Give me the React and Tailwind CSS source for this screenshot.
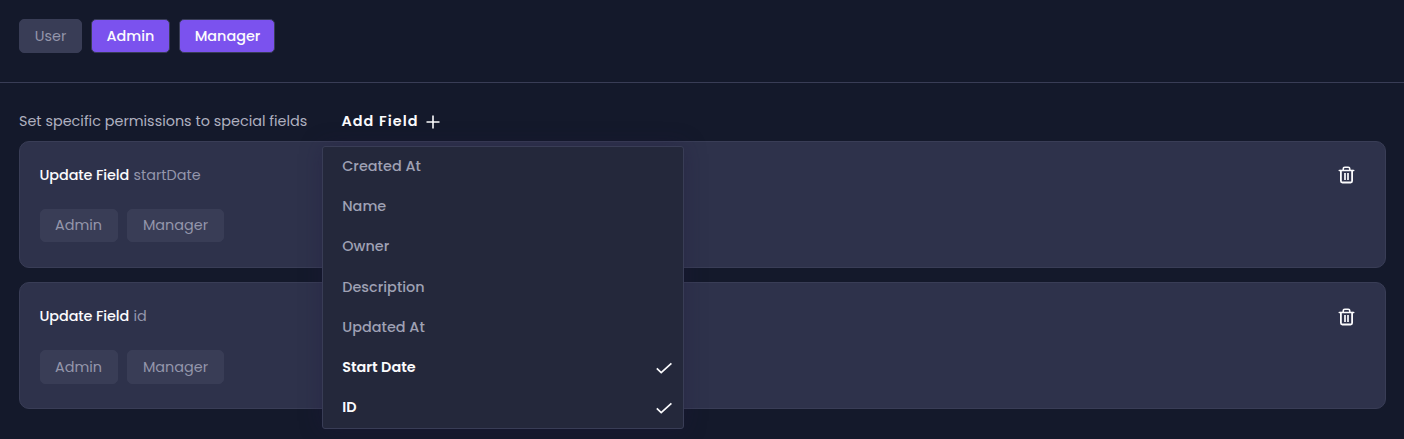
import React from "react";

const FIELDS = [
  { label: "Created At" },
  { label: "Name" },
  { label: "Owner" },
  { label: "Description" },
  { label: "Updated At" },
  { label: "Start Date", selected: true },
  { label: "ID", selected: true },
];

function TrashIcon() {
  return (
    <svg width="18" height="20" viewBox="0 0 18 20" fill="none" stroke="#fbfbfd" strokeLinecap="round" strokeLinejoin="round">
      <path d="M1.3 5.5H15.7" strokeWidth="1.6" />
      <path d="M5.2 5V3.9Q5.2 2.3 6.8 2.3H10.2Q11.8 2.3 11.8 3.9V5" strokeWidth="1.6" />
      <path d="M2.9 5.7V16Q2.9 17.5 4.4 17.5H12.6Q14.1 17.5 14.1 16V5.7" strokeWidth="1.8" />
      <path d="M7 8V15M10 8V15" strokeWidth="1.7" strokeLinecap="butt" />
    </svg>
  );
}

function CheckIcon() {
  return (
    <svg className="mt-[1.2px]" width="18" height="14" viewBox="0 0 18 14" fill="none" stroke="#fbfbfd" strokeWidth="1.7">
      <path d="M1.8 7.3L6.2 11.6L16.4 2.4" />
    </svg>
  );
}

function Chip({ children, className }) {
  return (
    <button className={`flex items-center justify-center rounded-[5px] border border-[#393d56] whitespace-nowrap ${className}`}>
      {children}
    </button>
  );
}

function FieldCard({ name, chipClass, iconClass }) {
  return (
    <section className="flex h-[127px] justify-between rounded-[10px] border border-[#393d56] bg-[#2e324b] pr-[29px] pl-[19.5px]">
      <div>
        <h2 className="mt-[22px] flex h-[22px] items-center gap-[4px]">
          <span className="w-[90px] font-medium tracking-[-0.1px] whitespace-nowrap text-[#fbfbfd]">Update Field</span>
          <span className="text-[#9496ab]">{name}</span>
        </h2>
        <div className="mt-[23px] flex gap-[9px]">
          <Chip className={`w-[78px] bg-[#393d56] text-[#9496ab] ${chipClass}`}>Admin</Chip>
          <Chip className={`w-[97px] bg-[#393d56] pl-px text-[#9496ab] ${chipClass}`}>Manager</Chip>
        </div>
      </div>
      <button className={`h-5 ${iconClass}`}><TrashIcon /></button>
    </section>
  );
}

export default function App() {
  return (
    <main className="h-[439px] w-[1404px] overflow-hidden bg-[#14192b] font-['Poppins','Inter',sans-serif] text-[14.4px] leading-[22px]">
      <header className="flex h-[83px] gap-[9px] border-b border-[#393d56] pt-[19px] pl-[19px]">
        <Chip className="h-[34px] w-[63px] bg-[#393d56] text-[#9496ab]">User</Chip>
        <Chip className="h-[34px] w-[79px] bg-[#7b52ee] font-medium text-[#fbfbfd]">Admin</Chip>
        <Chip className="h-[34px] w-[96px] bg-[#7b52ee] pl-px font-medium text-[#fbfbfd]">Manager</Chip>
      </header>
      <div className="flex h-[58px] items-center pt-[17px] pl-[19px]">
        <p className="w-[303px] whitespace-nowrap text-[#b0b1c0]">Set specific permissions to special fields</p>
        <div className="relative">
          <button className="flex items-center gap-2 pl-[19.4px] font-semibold text-[#fbfbfd]">
            <span className="w-[77px] text-left tracking-[1.08px] whitespace-nowrap">Add Field</span>
            <svg className="mt-[2px]" width="14" height="14" viewBox="0 0 14 14" stroke="#fbfbfd" strokeWidth="1.6">
              <path d="M7 .5V13.5M.5 7H13.5" />
            </svg>
          </button>
          <ul className="absolute top-[36.1px] left-0 z-10 w-[362px] rounded-[3px] border border-[#393d56] bg-[#24283b] shadow-[0_0_22px_rgba(31,22,62,0.35)]">
            {FIELDS.map((f) => (
              <li key={f.label} className={`flex h-[40.2px] items-center justify-between pr-[10px] pb-[1.4px] pl-[19.2px] ${f.selected ? "font-semibold text-[#fbfbfd]" : "font-medium tracking-[0.03px] text-[#9fa1b4]"}`}>
                <span>{f.label}</span>
                {f.selected && <CheckIcon />}
              </li>
            ))}
          </ul>
        </div>
      </div>
      <div className="flex flex-col gap-[14px] pr-[18px] pl-[19px]">
        <FieldCard name="startDate" chipClass="h-[33px] pb-px" iconClass="mt-[23px]" />
        <FieldCard name="id" chipClass="h-[34px]" iconClass="mt-[24px]" />
      </div>
    </main>
  );
}
